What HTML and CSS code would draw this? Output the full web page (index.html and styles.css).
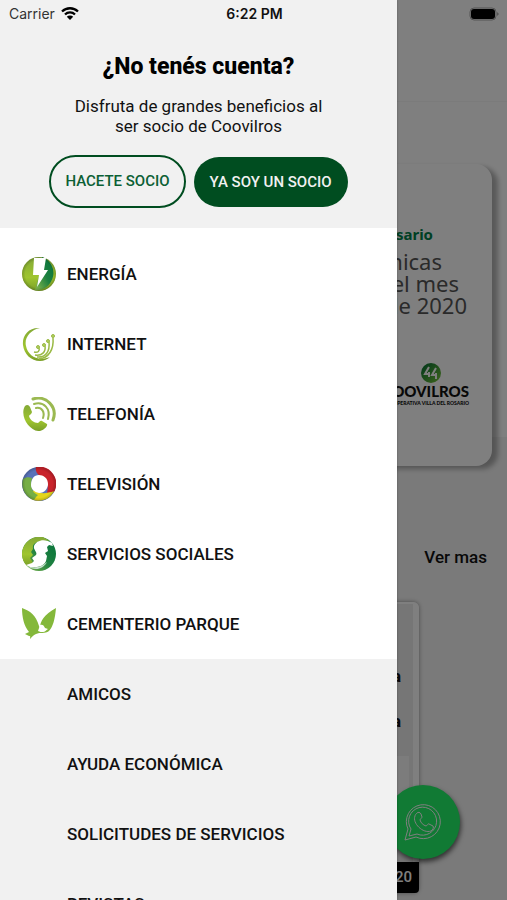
FILE: index.html
```html
<!DOCTYPE html>
<html lang="es">

<head>
  <meta charset="UTF-8" />
  <meta name="viewport" content="width=device-width, initial-scale=1" />
  <title>Coovilros</title>
  <link rel="stylesheet" href="styles.css">
</head>
<body>
  <div class="app">

    <!-- home page, under the scrim -->
    <main class="page">
      <header class="page-header"></header>

      <section class="slider">
        <article class="slide">
          <p class="slide-tag">Rosario</p>
          <p class="slide-title">
            <span class="line-one">nicas</span>
            <span class="line-two">del mes</span>
            <span class="line-three">de 2020</span>
          </p>
          <div class="slide-logo">
            <svg viewBox="0 0 20 20" width="20" height="20" aria-hidden="true">
              <circle cx="10" cy="10" r="10" fill="url(#logoGreen)" />
              <path d="M8 4L4 11h4v3M15 5l-4 7h4v4M8 9v5M15 10v6" fill="none" stroke="#fff" stroke-width="2" />
            </svg>
            <strong>COOVILROS</strong>
            <small>COOPERATIVA VILLA DEL ROSARIO</small>
          </div>
        </article>
      </section>

      <section class="news">
        <a class="see-more" href="#">Ver mas</a>
        <article class="news-card">
          <div class="news-body">
            <b>a</b>
            <b>a</b>
            <div class="news-box"></div>
          </div>
          <p class="news-date">2020</p>
        </article>
      </section>

      <button class="whatsapp" type="button" aria-label="WhatsApp">
        <svg viewBox="0 0 40 40" width="40" height="40" fill="none" stroke="#fff" stroke-linejoin="round">
          <path d="M2 38l3-11A17 17 0 1 1 13 35z" />
          <path d="M6 34l2-7A14 14 0 1 1 14 32z" />
          <path d="M14 11c1-1 3-1 4 1l1 3c0 1-2 2-2 3 1 3 3 5 6 6 1 0 2-3 3-2l4 2c1 1 0 4-2 5-8 3-19-8-16-15 0-1 1-2 2-3z" />
        </svg>
      </button>
    </main>

    <div class="scrim"></div>

    <aside class="drawer">
      <section class="account">
        <h1>¿No tenés cuenta?</h1>
        <p>Disfruta de grandes beneficios al ser socio de Coovilros</p>
        <div class="account-actions">
          <button class="btn btn-outline" type="button">HACETE SOCIO</button>
          <button class="btn btn-solid" type="button">YA SOY UN SOCIO</button>
        </div>
      </section>

      <nav>
        <ul class="menu menu-services">
          <li><a href="#">
            <svg class="icon" viewBox="0 0 34 34" aria-hidden="true">
              <defs>
                <linearGradient id="limeShade" x1="0" y1="0" x2="0" y2="1">
                  <stop offset="0" stop-color="#83a936" />
                  <stop offset="0.6" stop-color="#9fc52f" />
                  <stop offset="1" stop-color="#7a9f28" />
                </linearGradient>
                <linearGradient id="logoGreen" x1="0" y1="0" x2="1" y2="1">
                  <stop offset="0" stop-color="#006b35" />
                  <stop offset="1" stop-color="#7ccb3a" />
                </linearGradient>
                <linearGradient id="darkShade" x1="1" y1="0" x2="0" y2="1">
                  <stop offset="0" stop-color="#05733b" />
                  <stop offset="0.5" stop-color="#1d8040" />
                  <stop offset="1" stop-color="#8aba4c" />
                </linearGradient>
                <radialGradient id="rim">
                  <stop offset="0.8" stop-color="#000" stop-opacity="0" />
                  <stop offset="1" stop-color="#000" stop-opacity="0.2" />
                </radialGradient>
              </defs>
              <circle cx="17" cy="17" r="17" fill="url(#limeShade)" />
              <path d="M20 0a17 17 0 0 1-7 33l4-14z" fill="url(#darkShade)" />
              <circle cx="17" cy="17" r="17" fill="url(#rim)" />
              <path d="M12 1h12l-2 12h4L15 30l2-12h-6z" fill="#fff" />
            </svg>
            ENERGÍA</a></li>
          <li><a href="#">
            <svg class="icon" viewBox="0 0 34 34" aria-hidden="true">
              <path d="M18 1C7 0 0 8 1 18c1 9 8 16 17 16 4 0 8-2 10-4-12 5-22-1-24-11C2 11 8 3 18 1z" fill="url(#limeShade)" />
              <g fill="none" stroke="#9aba45" stroke-width="1.500">
                <path d="M12 25c4 1 6-1 5-4" />
                <path d="M13 28c7 1 11-3 10-9" />
                <path d="M15 30c9 1 13-6 12-15" />
                <path d="M17 32c10-1 15-10 14-21" />
              </g>
              <g fill="#b3cf63" stroke="#9aba45">
                <circle cx="16" cy="20" r="1.500" />
                <circle cx="22" cy="18" r="1.500" />
                <circle cx="26" cy="14" r="1.500" />
                <circle cx="31" cy="9" r="1.500" />
              </g>
            </svg>
            INTERNET</a></li>
          <li><a href="#">
            <svg class="icon" viewBox="0 0 34 34" aria-hidden="true">
              <path d="M3 9c2-2 4-1 5 1l2 5c0 2-3 3-3 4 1 4 5 7 9 7 1 0 2-3 4-2l5 3c1 2-3 6-7 7C8 35-3 19 3 9z" fill="url(#limeShade)" />
              <g fill="none" stroke="#9bb951" stroke-linecap="round">
                <path d="M14 11c6-1 9 4 7 10" stroke-width="2" />
                <path d="M12 7c10-3 17 5 14 15" stroke-width="2" />
                <path d="M11 2c13-4 25 8 20 21" stroke-width="3" />
              </g>
            </svg>
            TELEFONÍA</a></li>
          <li><a href="#">
            <svg class="icon" viewBox="0 0 34 34" aria-hidden="true">
              <circle cx="17" cy="17" r="17" fill="#5872b8" />
              <path d="M14 0a17 17 0 0 1 18 25l-7 1c2-8 0-14-7-17-3-2-5-5-4-9z" fill="#c9232b" />
              <path d="M32 24A17 17 0 0 1 9 32c-1-3 0-7 3-9 5 4 12 4 20 1z" fill="#e4d51c" />
              <path d="M12 33A17 17 0 0 1 1 12c3-2 6-2 9-1-2 8 0 15 6 17-2 2-3 3-4 5z" fill="#76ae45" />
              <circle cx="17" cy="17" r="17" fill="url(#rim)" />
              <path d="M17 8c4 0 9 3 9 9 0 4-3 9-9 9-5-1-8-4-8-8 0-6 3-10 8-10z" fill="#fff" />
            </svg>
            TELEVISIÓN</a></li>
          <li><a href="#">
            <svg class="icon" viewBox="0 0 34 34" aria-hidden="true">
              <circle cx="17" cy="17" r="17" fill="url(#darkShade)" />
              <path d="M21 0C9-2 0 7 0 17c0 5 2 9 5 12l6-2-1-3-2-3 3-3-2-3 2-3C10 7 14 3 28 4z" fill="url(#limeShade)" />
              <path d="M12 9c2-6 11-8 18-3l1 3-4-1-2 2 1 4-3 2 2 3-1 5c-2 5-8 7-16 6l-4-2 6-2 2-2-2-3 4-3c2-3-3-5-2-9z" fill="#fff" />
              <path d="M5 29c8 3 15 1 20-4-4 8-13 9-20 4z" fill="#c9dfcf" />
            </svg>
            SERVICIOS SOCIALES</a></li>
          <li><a href="#">
            <svg class="icon" viewBox="0 0 34 34" aria-hidden="true">
              <path d="M0 1c8 3 14 7 17 18l1 2c0-7 4-13 16-20-1 11-3 19-7 23-4 3-9 1-13 3-3 1-4 3-6 5 0-2 1-3-1-3l-4-2 4-2C2 19 0 10 0 1z" fill="#84b83b" />
              <path d="M16 24l2-6c2-1 4 0 5 3l3 1c-2 1-3 3-5 3s-3 0-5-1z" fill="#fff" />
            </svg>
            CEMENTERIO PARQUE</a></li>
        </ul>

        <ul class="menu menu-links">
          <li><a href="#">AMICOS</a></li>
          <li><a href="#">AYUDA ECONÓMICA</a></li>
          <li><a href="#">SOLICITUDES DE SERVICIOS</a></li>
          <li><a href="#">REVISTAS</a></li>
        </ul>
      </nav>
    </aside>

    <div class="status-bar">
      <span class="carrier">Carrier
        <svg viewBox="0 0 18 13" width="18" height="13" aria-hidden="true">
          <path d="M1 4.500a11.500 11.500 0 0 1 16 0M4 7.500a7 7 0 0 1 10 0" fill="none" stroke="#000" stroke-width="2.300" />
          <path d="M9 13L5.800 9.800a4.500 4.500 0 0 1 6.400 0z" />
        </svg>
      </span>
      <time>6:22 PM</time>
      <svg class="battery" viewBox="0 0 31 14" width="31" height="14" aria-hidden="true">
        <rect x="1" y="1" width="26" height="12" rx="4" fill="none" stroke="#555" />
        <rect x="2" y="2" width="24" height="10" rx="3" />
        <path d="M28 5v4l2-2z" fill="#555" />
      </svg>
    </div>
  </div>
</body>
</html>
```
FILE: styles.css
```css
:root {
  --green: #004d20;
  --panel: #f1f1f1;
  --peek: 110px;
}

* {
  box-sizing: border-box;
}

body {
  margin: 0;
  font-family: Roboto, sans-serif;
  font-size: 17px;
  color: #111;
}

h1,
p,
ul {
  margin: 0;
  padding: 0;
}

a {
  color: inherit;
  text-decoration: none;
}

button {
  font-family: inherit;
  cursor: pointer;
}

.app {
  position: relative;
  height: 100vh;
  overflow: hidden;
}

/* Status bar */
.status-bar {
  position: absolute;
  top: 0;
  left: 0;
  right: 0;
  display: grid;
  grid-template-columns: 1fr auto 1fr;
  align-items: center;
  height: 27px;
  padding: 0 7px 0 9px;
  font-family: Inter, sans-serif;
  font-size: 14px;
}

.carrier {
  display: flex;
  align-items: center;
  gap: 6px;
  color: #333;
}

.status-bar time {
  font-weight: 600;
}

.battery {
  justify-self: end;
}

/* Page */
.page {
  min-height: 100%;
  background: #f4f4f4;
}

.page-header {
  height: 102px;
  background: #fff;
  border-bottom: 1px solid #f7f7f7;
}

.slider {
  height: 335px;
  padding: 62px 15px 0 0;
  background: #fff;
}

.slide {
  height: 302px;
  padding: 60px 23px 0 0;
  background: #fff;
  border-radius: 16px;
  box-shadow: 6px 3px 5px rgba(0, 0, 0, 0.3);
  text-align: right;
}

.slide-tag {
  padding-right: 36px;
  font-family: "Noto Sans", sans-serif;
  font-size: 15px;
  font-weight: 700;
  line-height: 20px;
  color: #008048;
}

.slide-title {
  display: flex;
  flex-direction: column;
  padding-top: 6px;
  font-family: "Noto Sans", sans-serif;
  font-size: 22px;
  line-height: 22px;
  color: #555;
}

.line-one {
  padding-right: 27px;
}

.line-two {
  padding-right: 10px;
}

.line-three {
  padding-right: 2px;
}

.slide-logo {
  display: flex;
  flex-direction: column;
  align-items: flex-end;
  padding-top: 47px;
}

.slide-logo svg {
  margin-right: 28px;
}

.slide-logo strong {
  font-family: Lato, sans-serif;
  font-size: 15px;
  font-weight: 900;
  line-height: 17px;
}

.slide-logo small {
  font-family: Lato, sans-serif;
  font-size: 5px;
  font-weight: 900;
  line-height: 6px;
}

.news {
  display: flex;
  flex-direction: column;
  padding: 110px 20px 0 0;
}

.see-more {
  align-self: flex-end;
  font-weight: 500;
  line-height: 20px;
}

.news-card {
  margin: 35px 68px 0 0;
  border-radius: 6px;
  box-shadow: 0 0 4px rgba(0, 0, 0, 0.4);
}

.news-body {
  display: flex;
  flex-direction: column;
  align-items: flex-end;
  gap: 25px;
  height: 260px;
  padding: 62px 18px 0 0;
  border: solid #fff;
  border-width: 2px 6px 0 0;
  border-radius: 6px;
  background: #ececec;
}

.news-body b {
  margin-right: -6px;
  line-height: 20px;
}

.news-box {
  width: 100%;
  height: 80px;
  margin-right: -14px;
  background: #f8f8f8;
}

.news-date {
  padding: 0 7px;
  border-radius: 0 0 4px 4px;
  background: #000;
  color: #fff;
  font-size: 15px;
  font-weight: 500;
  line-height: 31px;
  text-align: right;
}

.whatsapp {
  position: absolute;
  right: 47px;
  bottom: 41px;
  display: flex;
  align-items: center;
  justify-content: center;
  width: 74px;
  height: 74px;
  padding: 0;
  border: 0;
  border-radius: 50%;
  background: #22f468;
  box-shadow: 1px 3px 5px rgba(0, 0, 0, 0.6);
}

.scrim {
  position: absolute;
  inset: 0;
  background: rgba(0, 0, 0, 0.5);
}

/* Drawer */
.drawer {
  position: absolute;
  top: 0;
  bottom: 0;
  left: 0;
  right: var(--peek);
  overflow: hidden;
  background: var(--panel);
  box-shadow: 0 0 2px rgba(0, 0, 0, 0.3);
}

.account {
  display: flex;
  flex-direction: column;
  align-items: center;
  padding: 53px 16px 20px;
  text-align: center;
}

.account h1 {
  font-size: 23px;
  font-weight: 800;
  line-height: 28px;
  color: #000;
}

.account p {
  max-width: 260px;
  padding-top: 15px;
  line-height: 20px;
}

.account-actions {
  display: flex;
  align-items: center;
  gap: 8px;
  padding-top: 19px;
}

.btn {
  padding: 0 16px;
  border: 0;
  border-radius: 27px;
  font-size: 15px;
  font-weight: 500;
  line-height: 50px;
  white-space: nowrap;
}

.btn-outline {
  padding: 0 14px;
  border: 2px solid var(--green);
  background: transparent;
  color: #0b6035;
  line-height: 49px;
}

.btn-solid {
  background: var(--green);
  color: #f1f1f1;
}

.menu {
  list-style: none;
  font-weight: 500;
}

.menu a {
  display: flex;
  align-items: center;
  gap: 11px;
  height: 70px;
  padding-left: 22px;
}

.menu-services {
  padding-top: 11px;
  background: #fff;
}

.menu-links a {
  padding-left: 67px;
}

.icon {
  flex: none;
  width: 34px;
  height: 34px;
}
```
